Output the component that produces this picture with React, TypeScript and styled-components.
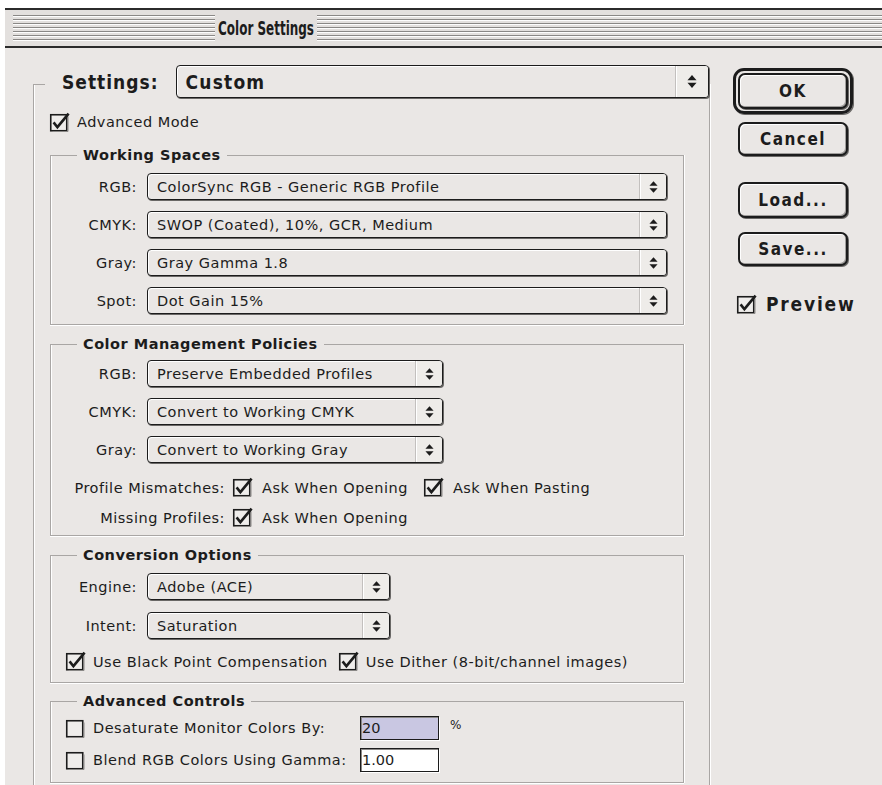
import React from "react";
import styled, { createGlobalStyle } from "styled-components";

const face = "#eae7e5";
const ink = "#1c1c1c";
const etch = "#a9a6a4";
const chunky = `"DejaVu Sans Condensed", "DejaVu Sans", sans-serif`;

const GlobalStyle = createGlobalStyle`
  html, body {
    margin: 0;
    padding: 0;
    background: #fff;
  }
  body {
    font-family: "DejaVu Sans", "Noto Sans", sans-serif;
    font-size: 14.5px;
    letter-spacing: 0.5px;
    color: ${ink};
  }
`;

const Page = styled.div`
  height: 785px;
  overflow: hidden;
  box-sizing: border-box;
  padding: 8px 0 0 5px;
`;

const Window = styled.div`
  height: 100%;
  background: ${face};
  border-top: 2px solid #2b2b2b;
`;

const TitleBar = styled.div`
  display: flex;
  align-items: center;
  gap: 4px;
  height: 36px;
  padding-left: 8px;
  background: #e3e0de;
  border-bottom: 2px solid #2b2b2b;
`;

const Stripes = styled.div<{ $width?: number }>`
  height: 26px;
  flex: ${(p) => (p.$width ? "none" : 1)};
  width: ${(p) => (p.$width ? `${p.$width}px` : "auto")};
  background: repeating-linear-gradient(
    to bottom,
    #8a8886 0 1px,
    #fdfdfd 1px 2px,
    transparent 2px 4px
  );
`;

/* Charcoal-style narrow title: the glyphs are squeezed, the box keeps the narrow width */
const Title = styled.div`
  width: 94px;
  display: flex;
  justify-content: center;
  white-space: nowrap;
  font-family: ${chunky};
  font-weight: bold;
  font-size: 19px;
  letter-spacing: 0;
  transform: scaleX(0.7);
`;

const Body = styled.div`
  display: flex;
  align-items: flex-start;
  padding-top: 17px;
`;

const SettingsFrame = styled.fieldset`
  width: 677px;
  box-sizing: border-box;
  margin: 0 0 0 28px;
  padding: 0 0 60px 0;
  border: 1px solid ${etch};
  border-bottom: none;
  box-shadow: inset 1px 0 0 #fff, 1px 0 0 #fff;
`;

const SettingsLegend = styled.legend`
  width: calc(100% - 11px);
  box-sizing: border-box;
  margin-left: 11px;
  padding: 0 0 6px 17px;
`;

const LegendRow = styled.div`
  display: flex;
  align-items: center;
  gap: 17px;
`;

const BigLabel = styled.span`
  font-family: ${chunky};
  font-weight: bold;
  font-size: 19px;
  letter-spacing: 1px;
`;

const Popup = styled.div<{ $big?: boolean; $width?: number }>`
  display: flex;
  align-items: stretch;
  flex: ${(p) => (p.$width ? "none" : 1)};
  width: ${(p) => (p.$width ? `${p.$width}px` : "auto")};
  height: ${(p) => (p.$big ? 33 : 27)}px;
  box-sizing: border-box;
  border: 1.5px solid ${ink};
  border-radius: 4px;
  background: ${face};
  box-shadow: 1px 1px 0 #6a6866, inset 1px 1px 0 #fff;
`;

const PopupText = styled.span<{ $big?: boolean }>`
  flex: 1;
  display: flex;
  align-items: center;
  white-space: nowrap;
  padding-left: 9px;
  font-family: ${(p) => (p.$big ? chunky : "inherit")};
  font-weight: ${(p) => (p.$big ? "bold" : "normal")};
  font-size: ${(p) => (p.$big ? 19 : 14.5)}px;
  letter-spacing: ${(p) => (p.$big ? 1.2 : 0.5)}px;
`;

const PopupArrows = styled.span<{ $big?: boolean }>`
  width: ${(p) => (p.$big ? 32 : 26)}px;
  display: flex;
  align-items: center;
  justify-content: center;
  border-left: 1px solid #c3c0be;
  box-shadow: inset 1px 0 0 #fff;
  background: #eeece9;
  border-radius: 0 3px 3px 0;
`;

const UpDown = ({ size }: { size: number }) => (
  <svg width={size} height={size + 5} viewBox="0 0 10 15">
    <polygon points="0.5,6.2 5,1 9.5,6.2" fill={ink} />
    <polygon points="0.5,8.8 9.5,8.8 5,14" fill={ink} />
  </svg>
);

const Select = ({ value, big, width }: { value: string; big?: boolean; width?: number }) => (
  <Popup $big={big} $width={width}>
    <PopupText $big={big}>{value}</PopupText>
    <PopupArrows $big={big}>
      <UpDown size={big ? 10 : 9} />
    </PopupArrows>
  </Popup>
);

const BoxIcon = styled.svg`
  flex: none;
  display: block;
`;

const CheckBox = ({ checked }: { checked?: boolean }) => (
  <BoxIcon width="21" height="21" viewBox="0 0 21 21">
    <rect x="1.75" y="2.75" width="16" height="16" fill="#efedeb" stroke={ink} strokeWidth="1.6" />
    <path d="M19 4.5V19.5H3.5" stroke="#8a8886" strokeWidth="1" fill="none" />
    {checked && (
      <path
        d="M4.6 10.4L8.4 15.2L19.6 1.6"
        stroke={ink}
        strokeWidth="2.6"
        fill="none"
        strokeLinejoin="miter"
      />
    )}
  </BoxIcon>
);

const CheckItem = styled.label<{ $gap?: number }>`
  display: inline-flex;
  align-items: center;
  gap: ${(p) => p.$gap ?? 9}px;
  white-space: nowrap;
`;

const ModeRow = styled.div`
  display: flex;
  margin: 9px 0 0 15px;
  height: 18px;
  align-items: center;
`;

const Group = styled.fieldset<{ $top: number; $bottom: number }>`
  margin: ${(p) => p.$top}px 25px 0 16px;
  padding: 0 15px ${(p) => p.$bottom}px 16px;
  border: 1px solid ${etch};
  box-shadow: 0 1px 0 #fff, 1px 0 0 #fff, inset 1px 0 0 #fff;
`;

const GroupTitle = styled.legend`
  margin-left: 10px;
  padding: 0 6px;
  font-weight: bold;
  font-size: 14.5px;
  letter-spacing: 0.5px;
  line-height: 16px;
`;

const FieldGrid = styled.div<{ $control: number; $pad: number; $gap: number }>`
  display: grid;
  grid-template-columns: 70px ${(p) => p.$control}px;
  column-gap: 10px;
  row-gap: ${(p) => p.$gap}px;
  align-items: center;
  padding-top: ${(p) => p.$pad}px;
`;

const FieldLabel = styled.span`
  text-align: right;
  white-space: nowrap;
`;

const PolicyGrid = styled.div`
  display: grid;
  grid-template-columns: 158px auto;
  column-gap: 7px;
  row-gap: 9px;
  align-items: center;
  margin-top: 14px;
`;

const CheckPair = styled.div`
  display: flex;
  gap: 15px;
`;

const OptionRow = styled.div`
  display: flex;
  gap: 10px;
  margin: 12px 0 0 -2px;
`;

const AdvancedGrid = styled.div`
  display: grid;
  grid-template-columns: 21px 260px 79px auto;
  column-gap: 7px;
  row-gap: 8px;
  align-items: center;
  margin: 7px 0 0 -2px;
`;

const TextField = styled.div<{ $tint?: boolean }>`
  width: 79px;
  height: 24px;
  box-sizing: border-box;
  display: flex;
  align-items: center;
  padding-left: 1px;
  letter-spacing: 0;
  border: 1.5px solid ${ink};
  box-shadow: inset 1px 1px 0 #8a8886, 1px 1px 0 #fff;
  background: ${(p) => (p.$tint ? "#c9c7e2" : "#fff")};
`;

const Percent = styled.span`
  margin-left: 4px;
  align-self: start;
  font-size: 12px;
  padding-top: 2px;
`;

const ButtonColumn = styled.div`
  display: flex;
  flex-direction: column;
  align-items: flex-start;
  margin-left: 23px;
  padding-top: 3px;
`;

const DefaultRing = styled.div`
  border: 3px solid ${ink};
  border-radius: 11px;
  padding: 2px;
  box-shadow: 1px 1px 0 #6a6866;
`;

const PushButton = styled.button<{ $space?: number; $tall?: boolean }>`
  width: 110px;
  height: ${(p) => (p.$tall ? 36 : 34)}px;
  margin: ${(p) => p.$space ?? 0}px 0 0 ${(p) => (p.$space === undefined ? 0 : 5)}px;
  box-sizing: border-box;
  border: 2px solid ${ink};
  border-radius: 7px;
  background: ${face};
  box-shadow: inset 1px 1px 0 #fff, inset -1px -1px 0 #a09e9c, 1px 1px 0 #6a6866;
  font-family: ${chunky};
  font-weight: bold;
  font-size: 17px;
  letter-spacing: 1.5px;
  color: ${ink};
  padding: 0;
`;

const PreviewRow = styled.div`
  margin: 27px 0 0 3px;
`;

const PreviewText = styled.span`
  font-family: ${chunky};
  font-weight: bold;
  font-size: 19px;
  letter-spacing: 1.8px;
`;

const workingSpaces = [
  ["RGB:", "ColorSync RGB - Generic RGB Profile"],
  ["CMYK:", "SWOP (Coated), 10%, GCR, Medium"],
  ["Gray:", "Gray Gamma 1.8"],
  ["Spot:", "Dot Gain 15%"],
];

const policies = [
  ["RGB:", "Preserve Embedded Profiles"],
  ["CMYK:", "Convert to Working CMYK"],
  ["Gray:", "Convert to Working Gray"],
];

const conversion = [
  ["Engine:", "Adobe (ACE)"],
  ["Intent:", "Saturation"],
];

export default function App() {
  return (
    <Page>
      <GlobalStyle />
      <Window>
        <TitleBar>
          <Stripes $width={202} />
          <Title>Color Settings</Title>
          <Stripes />
        </TitleBar>

        <Body>
          <SettingsFrame>
            <SettingsLegend>
              <LegendRow>
                <BigLabel>Settings:</BigLabel>
                <Select big value="Custom" />
              </LegendRow>
            </SettingsLegend>

            <ModeRow>
              <CheckItem $gap={7}>
                <CheckBox checked />
                Advanced Mode
              </CheckItem>
            </ModeRow>

            <Group $top={16} $bottom={10}>
              <GroupTitle>Working Spaces</GroupTitle>
              <FieldGrid $control={520} $pad={10} $gap={11}>
                {workingSpaces.map(([label, value]) => (
                  <React.Fragment key={label}>
                    <FieldLabel>{label}</FieldLabel>
                    <Select value={value} />
                  </React.Fragment>
                ))}
              </FieldGrid>
            </Group>

            <Group $top={11} $bottom={7}>
              <GroupTitle>Color Management Policies</GroupTitle>
              <FieldGrid $control={296} $pad={8} $gap={11}>
                {policies.map(([label, value]) => (
                  <React.Fragment key={label}>
                    <FieldLabel>{label}</FieldLabel>
                    <Select value={value} />
                  </React.Fragment>
                ))}
              </FieldGrid>
              <PolicyGrid>
                <FieldLabel>Profile Mismatches:</FieldLabel>
                <CheckPair>
                  <CheckItem>
                    <CheckBox checked />
                    Ask When Opening
                  </CheckItem>
                  <CheckItem>
                    <CheckBox checked />
                    Ask When Pasting
                  </CheckItem>
                </CheckPair>
                <FieldLabel>Missing Profiles:</FieldLabel>
                <CheckItem>
                  <CheckBox checked />
                  Ask When Opening
                </CheckItem>
              </PolicyGrid>
            </Group>

            <Group $top={11} $bottom={10}>
              <GroupTitle>Conversion Options</GroupTitle>
              <FieldGrid $control={243} $pad={10} $gap={12}>
                {conversion.map(([label, value]) => (
                  <React.Fragment key={label}>
                    <FieldLabel>{label}</FieldLabel>
                    <Select value={value} />
                  </React.Fragment>
                ))}
              </FieldGrid>
              <OptionRow>
                <CheckItem $gap={7}>
                  <CheckBox checked />
                  Use Black Point Compensation
                </CheckItem>
                <CheckItem $gap={7}>
                  <CheckBox checked />
                  Use Dither (8-bit/channel images)
                </CheckItem>
              </OptionRow>
            </Group>

            <Group $top={10} $bottom={10}>
              <GroupTitle>Advanced Controls</GroupTitle>
              <AdvancedGrid>
                <CheckBox />
                <span>Desaturate Monitor Colors By:</span>
                <TextField $tint>20</TextField>
                <Percent>%</Percent>
                <CheckBox />
                <span>Blend RGB Colors Using Gamma:</span>
                <TextField>1.00</TextField>
                <span />
              </AdvancedGrid>
            </Group>
          </SettingsFrame>

          <ButtonColumn>
            <DefaultRing>
              <PushButton $tall>OK</PushButton>
            </DefaultRing>
            <PushButton $space={8}>Cancel</PushButton>
            <PushButton $space={26} $tall>
              Load...
            </PushButton>
            <PushButton $space={14}>Save...</PushButton>
            <PreviewRow>
              <CheckItem $gap={9}>
                <CheckBox checked />
                <PreviewText>Preview</PreviewText>
              </CheckItem>
            </PreviewRow>
          </ButtonColumn>
        </Body>
      </Window>
    </Page>
  );
}
